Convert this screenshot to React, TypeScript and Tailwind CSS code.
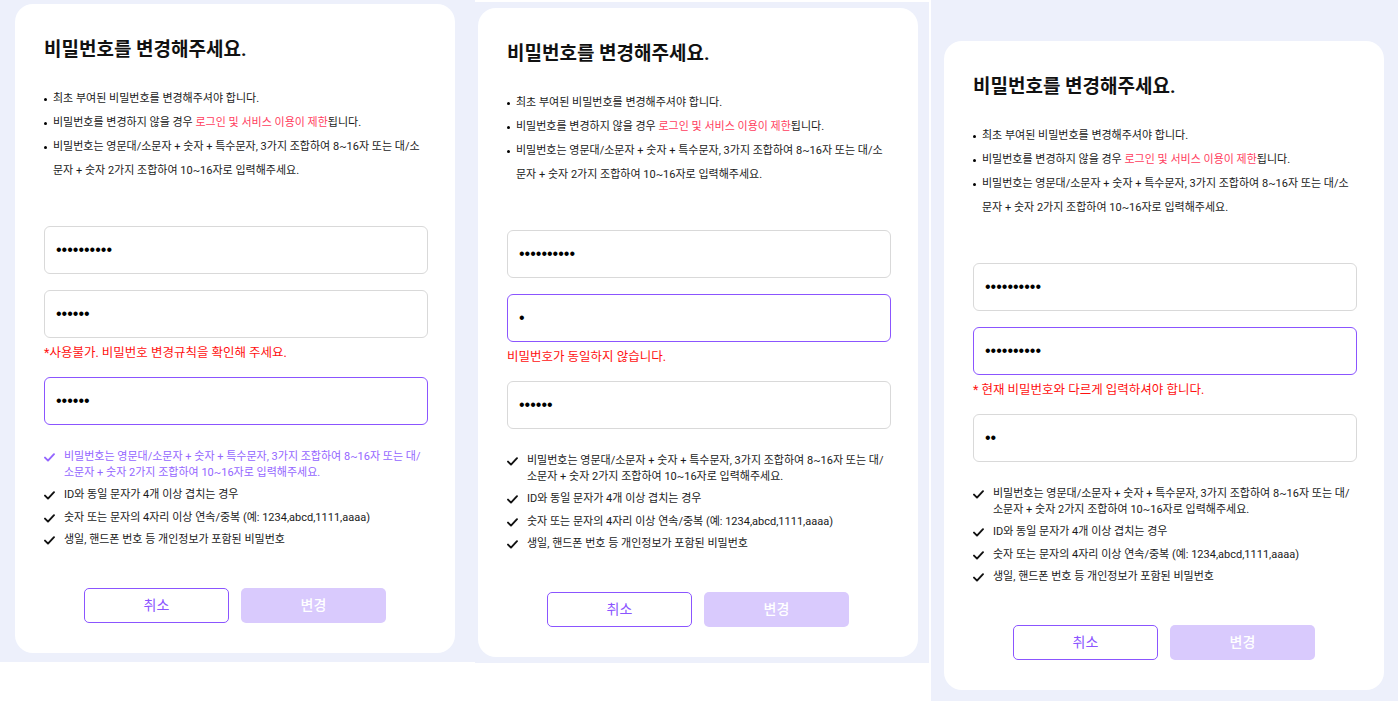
import { useEffect, useRef } from "react";

type Field = { length: number; active?: boolean; focus?: boolean; error?: string };

type Panel = {
  wrap: string;
  fields: Field[];
  highlightFirstRule?: boolean;
};

const panels: Panel[] = [
  {
    wrap: "w-[475px] h-[662px] pl-[15px] pt-[4px]",
    fields: [
      { length: 10 },
      { length: 6, error: "*사용불가. 비밀번호 변경규칙을 확인해 주세요." },
      { length: 6, active: true },
    ],
    highlightFirstRule: true,
  },
  {
    wrap: "w-[454px] h-[661px] mt-[2px] pl-[3px] pt-[6px]",
    fields: [
      { length: 10 },
      { length: 1, active: true, error: "비밀번호가 동일하지 않습니다." },
      { length: 6 },
    ],
  },
  {
    wrap: "flex-1 h-[701px] ml-[2px] pl-[13px] pt-[41px]",
    fields: [
      { length: 10 },
      { length: 10, active: true, focus: true, error: "* 현재 비밀번호와 다르게 입력하셔야 합니다." },
      { length: 2 },
    ],
  },
];

const rules = [
  "비밀번호는 영문대/소문자 + 숫자 + 특수문자, 3가지 조합하여 8~16자 또는 대/소문자 + 숫자 2가지 조합하여 10~16자로 입력해주세요.",
  "ID와 동일 문자가 4개 이상 겹치는 경우",
  "숫자 또는 문자의 4자리 이상 연속/중복 (예: 1234,abcd,1111,aaaa)",
  "생일, 핸드폰 번호 등 개인정보가 포함된 비밀번호",
];

const Check = ({ color }: { color: string }) => (
  <svg width="11" height="9" viewBox="0 0 11 9" className="mt-[4px] shrink-0" fill="none">
    <path d="M1 4.6 L4 7.6 L10 1.2" stroke={color} strokeWidth="1.9" strokeLinecap="round" strokeLinejoin="round" />
  </svg>
);

const PasswordInput = ({ field }: { field: Field }) => {
  const ref = useRef<HTMLInputElement>(null);

  useEffect(() => {
    if (field.focus && ref.current) {
      ref.current.focus();
      ref.current.setSelectionRange(field.length, field.length);
    }
  }, [field]);

  return (
    <div className="flex flex-col">
      <input
        ref={ref}
        type="password"
        defaultValue={"a".repeat(field.length)}
        className={
          field.active
            ? "h-12 w-full rounded-[6px] border border-[#8b55ff] bg-white px-[11px] font-['Liberation_Sans',Arial,sans-serif] text-[16px] text-black caret-black outline-none"
            : "h-12 w-full rounded-[6px] border border-[#d9d9d9] bg-white px-[11px] font-['Liberation_Sans',Arial,sans-serif] text-[16px] text-black caret-black outline-none"
        }
      />
      {field.error && (
        <p className="pt-[7px] text-[12.5px] leading-[16px] text-[#ff1010]">{field.error}</p>
      )}
    </div>
  );
};

const Card = ({ panel }: { panel: Panel }) => (
  <div className="flex h-[649px] w-[440px] flex-col rounded-[18px] bg-white pl-[29px] pr-[27px] pt-[32px] text-[#1a1a1a]">
    <h2 className="text-[19px] font-bold leading-[28px] text-[#111]">비밀번호를 변경해주세요.</h2>

    <ul className="mt-[23px] flex flex-col text-[11px] leading-[24px]">
      <li className="flex gap-[6px]">
        <span className="mt-[11px] h-[3px] w-[3px] shrink-0 rounded-full bg-black" />
        <span>최초 부여된 비밀번호를 변경해주셔야 합니다.</span>
      </li>
      <li className="flex gap-[6px]">
        <span className="mt-[11px] h-[3px] w-[3px] shrink-0 rounded-full bg-black" />
        <span>
          비밀번호를 변경하지 않을 경우 <span className="text-[#ff3d5e]">로그인 및 서비스 이용이 제한</span>됩니다.
        </span>
      </li>
      <li className="flex gap-[6px]">
        <span className="mt-[11px] h-[3px] w-[3px] shrink-0 rounded-full bg-black" />
        <span>{rules[0]}</span>
      </li>
    </ul>

    <div className="mt-[43px] flex flex-col gap-4">
      {panel.fields.map((field, i) => (
        <PasswordInput key={i} field={field} />
      ))}
    </div>

    <ul className="mt-[23.5px] flex flex-col gap-[6.5px] text-[11px] leading-[16px]">
      {rules.map((rule, i) => {
        const purple = panel.highlightFirstRule && i === 0;
        return (
          <li key={i} className={purple ? "flex gap-[9px] text-[#9466ff]" : "flex gap-[9px]"}>
            <Check color={purple ? "#9466ff" : "#111"} />
            <span>{rule}</span>
          </li>
        );
      })}
    </ul>

    <div className="mt-[40px] flex justify-center gap-3 pr-[2px]">
      <button className="h-[35px] w-[145px] rounded-[5px] border border-[#8b55ff] bg-white text-[14px] text-[#8b55ff]">
        취소
      </button>
      <button className="h-[35px] w-[145px] rounded-[5px] bg-[#d9cafd] text-[14px] font-medium text-white">
        변경
      </button>
    </div>
  </div>
);

export default function App() {
  return (
    <div className="flex h-[701px] w-[1398px] items-start bg-white font-['Roboto','Noto_Sans_CJK_KR',sans-serif]">
      {panels.map((panel, i) => (
        <div key={i} className={"bg-[#edf0fb] " + panel.wrap}>
          <Card panel={panel} />
        </div>
      ))}
    </div>
  );
}
